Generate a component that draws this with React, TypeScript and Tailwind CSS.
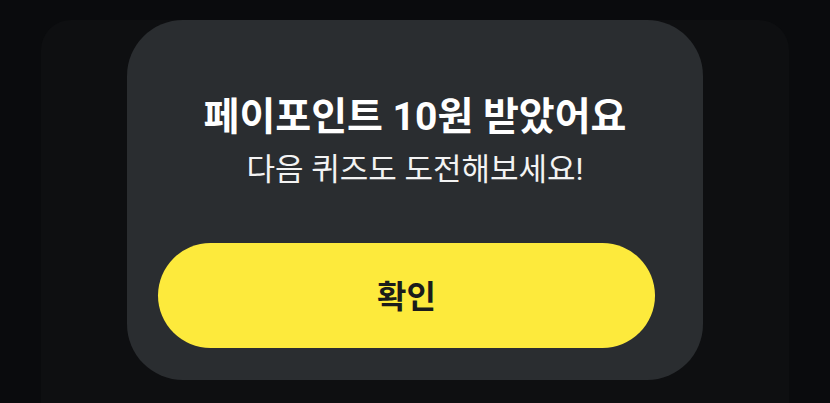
import React from "react";

const font = { fontFamily: 'Roboto, "Noto Sans CJK KR", sans-serif' };

export default function App() {
  return (
    <div
      className="w-[830px] h-[403px] overflow-hidden bg-[#0a0b0d] px-[41px] pt-[20px] flex"
      style={font}
    >
      <div className="flex-1 h-[420px] rounded-t-[30px] bg-[#0e0f11] px-[86px]">
        <div className="h-[360px] rounded-[56px] bg-[#2a2d30] pl-[31px] pr-[48px] pt-[73px] pb-[32px] flex flex-col items-center">
          <h1 className="pl-[17px] text-[39px] leading-[48px] font-bold text-white">
            페이포인트 10원 받았어요
          </h1>
          <p className="mt-[10px] pl-[17px] text-[31px] leading-[38px] text-[#f3f3f3]">
            다음 퀴즈도 도전해보세요!
          </p>
          <button className="mt-auto w-full h-[105px] pt-[2px] rounded-full bg-[#fdea3c] text-[32px] font-bold text-[#1b1b1b]">
            확인
          </button>
        </div>
      </div>
    </div>
  );
}
